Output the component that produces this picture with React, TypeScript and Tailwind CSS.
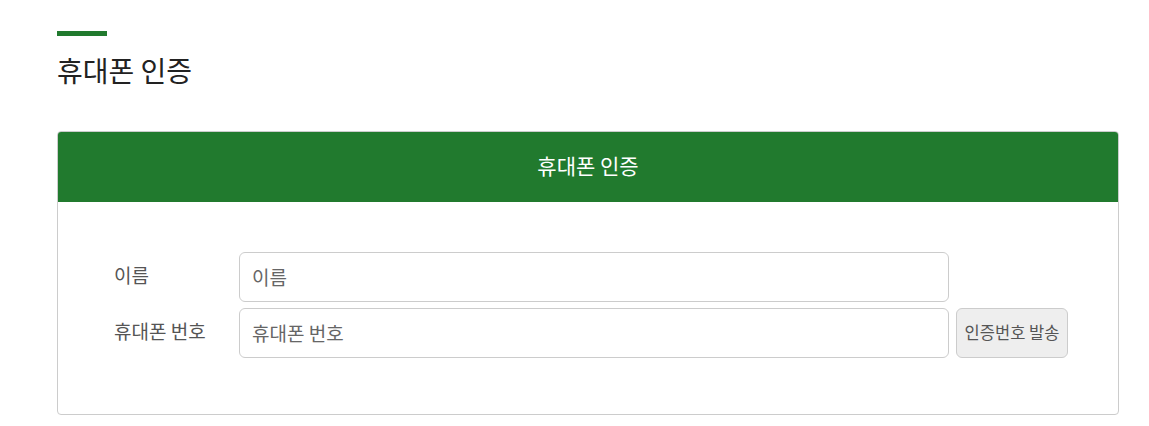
export default function App() {
  const font = { fontFamily: '"Noto Sans CJK KR", "Noto Sans", sans-serif' };
  return (
    <div className="min-h-screen w-full bg-white px-[57px] pt-[31px]" style={font}>
      {/* Page title */}
      <div className="h-[5px] w-[50px] bg-[#217a2e]" />
      <h1 className="mt-[14px] text-[28px] leading-[40px] text-[#222]">휴대폰 인증</h1>

      {/* Card */}
      <div className="mt-[41px] w-[1062px] overflow-hidden rounded-[4px] border border-[#ccc]">
        <div className="flex h-[70px] items-center justify-center bg-[#217a2e] pb-[3px] text-[21px] text-white">휴대폰 인증</div>
        <div className="flex flex-col gap-[6px] pb-[56px] pl-[56px] pr-[50px] pt-[50px]">
          <div className="flex items-center">
            <label className="w-[125px] shrink-0 pb-[3px] text-[19px] text-[#555]">이름</label>
            <input
              placeholder="이름"
              className="h-[50px] w-[710px] shrink-0 rounded-[6px] border border-[#ccc] px-[12px] pb-[2px] text-[19px] text-[#555] outline-none placeholder:text-[#666]"
            />
          </div>
          <div className="flex items-center">
            <label className="w-[125px] shrink-0 pb-[3px] text-[19px] text-[#555]">휴대폰 번호</label>
            <input
              placeholder="휴대폰 번호"
              className="h-[50px] w-[710px] shrink-0 rounded-[6px] border border-[#ccc] px-[12px] pb-[2px] text-[19px] text-[#555] outline-none placeholder:text-[#666]"
            />
            <button className="ml-[7px] h-[50px] w-[112px] shrink-0 rounded-[6px] border border-[#ccc] bg-[#eee] pb-[2px] text-[16.5px] text-[#555]">
              인증번호 발송
            </button>
          </div>
        </div>
      </div>
    </div>
  );
}
